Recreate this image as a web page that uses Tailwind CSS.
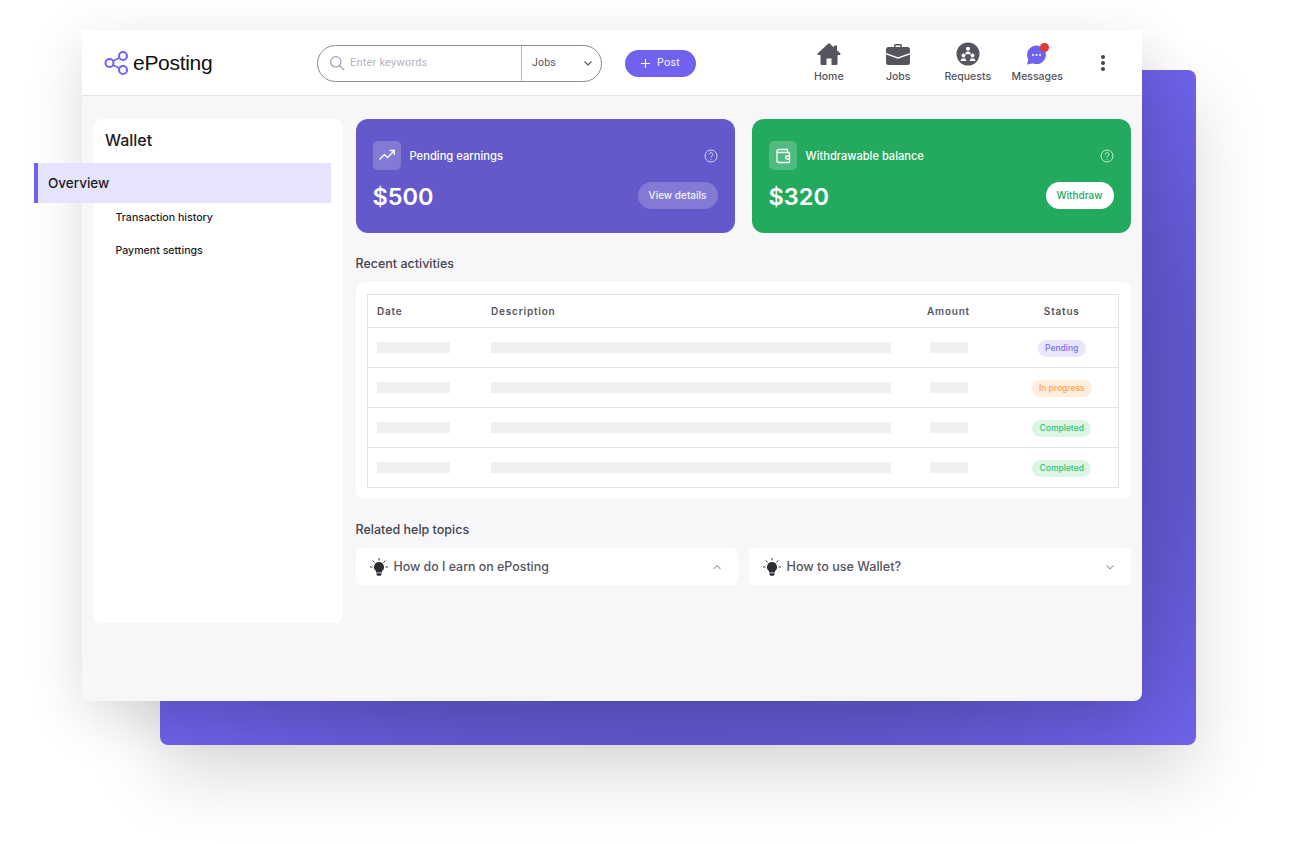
<!DOCTYPE html>
<html lang="en">
<head>
  <meta charset="UTF-8">
  <title>ePosting Wallet</title>
  <script src="https://cdn.jsdelivr.net/npm/@tailwindcss/browser@4"></script>
</head>
<body class="bg-white font-['Inter',sans-serif] overflow-hidden">
  <div class="relative w-[1302px] h-[844px] overflow-hidden bg-white">
    <!-- Purple backdrop -->
    <div class="absolute left-[160px] top-[70px] w-[1036px] h-[675px] rounded-[8px] bg-[radial-gradient(ellipse_at_center,#5a50bd_45%,#6056cc_72%,#6e61e8_100%)] shadow-[0_30px_70px_rgba(0,0,0,0.15)]"></div>

    <!-- App window -->
    <div class="absolute left-[82px] top-[30px] w-[1060px] h-[671px] rounded-b-[8px] bg-[#f7f7fa] shadow-[0_15px_55px_rgba(0,0,0,0.14)]">
      <!-- Header -->
      <header class="h-[66px] bg-white border-b border-[#e6e6ec] flex items-center">
        <div class="w-[235px] pl-[22px] flex items-center gap-[3px]">
          <svg width="26" height="26" viewBox="0 0 26 26" fill="none" stroke="#6f62ee" stroke-width="2">
            <circle cx="5.5" cy="13" r="4"/>
            <circle cx="19" cy="6" r="4"/>
            <circle cx="19" cy="20" r="4"/>
            <path d="M9 11l6-3M9 15l6 3" stroke-width="1.4"/>
          </svg>
          <span class="font-['Liberation_Sans',sans-serif] text-[21px] leading-none text-[#111] tracking-[-0.3px]">ePosting</span>
        </div>
        <div class="mt-[1px] w-[285px] h-[37px] border border-[#8b8a96] rounded-full flex items-center font-['Roboto',sans-serif]">
          <div class="w-[204px] h-full flex items-center pl-[11px] gap-[5px] border-r border-[#b5b5bd]">
            <svg width="16" height="16" viewBox="0 0 16 16" fill="none" stroke="#a2a2aa" stroke-width="1.2"><circle cx="6.8" cy="6.8" r="5.2"/><path d="M10.6 10.6l4.4 4.4"/></svg>
            <span class="text-[11px] text-[#b4b4bc] tracking-[0.2px]">Enter keywords</span>
          </div>
          <div class="flex-1 flex items-center justify-between pl-[10px] pr-[8px]">
            <span class="text-[10.5px] text-[#55545f] tracking-[0.2px]">Jobs</span>
            <svg width="10" height="10" viewBox="0 0 10 10" fill="none" stroke="#55545f" stroke-width="1.1"><path d="M1.5 3.5L5 7l3.5-3.5"/></svg>
          </div>
        </div>
        <button class="mt-[1px] ml-[23px] w-[71px] h-[27px] rounded-full bg-[#6f62ee] text-white flex items-center justify-center gap-[7px] text-[10.5px] tracking-[0.3px]">
          <svg width="9" height="9" viewBox="0 0 9 9" stroke="#fff" stroke-width="1.1"><path d="M4.5 0v9M0 4.5h9"/></svg>
          Post
        </button>
        <nav class="ml-[98px] flex items-start">
          <div class="w-[69.5px] flex flex-col items-center gap-[4px]">
            <svg width="24" height="24" viewBox="0 0 24 24" fill="#55545f"><path d="M12 1L0.800 11.300c-.7.700-.3 1.700.7 1.700H3.500v8.500A1.500 1.500 0 0 0 5 23h4.500v-6.500h5V23H19a1.500 1.500 0 0 0 1.500-1.500V13h2c1 0 1.400-1 .7-1.700L20 8.300V3.500h-3v2z"/></svg>
            <span class="text-[10.5px] font-medium leading-[14px] text-[#55545f]">Home</span>
          </div>
          <div class="w-[69.5px] flex flex-col items-center gap-[4px]">
            <svg width="24" height="24" viewBox="0 0 24 24"><path fill="#55545f" d="M8 5V3.500A1.500 1.500 0 0 1 9.500 2h5A1.500 1.500 0 0 1 16 3.500V5h5.500A2.500 2.500 0 0 1 24 7.500V11l-12 4.200L0 11V7.500A2.500 2.500 0 0 1 2.500 5zm1.500 0h5V3.500h-5z"/><path fill="#55545f" d="M0 12.600l12 4.200 12-4.200v7.900a2.500 2.500 0 0 1-2.500 2.500h-19A2.500 2.500 0 0 1 0 20.500z"/></svg>
            <span class="text-[10.5px] font-medium leading-[14px] text-[#55545f]">Jobs</span>
          </div>
          <div class="w-[69.5px] flex flex-col items-center gap-[4px]">
            <svg width="24" height="24" viewBox="0 0 24 24"><circle cx="12" cy="12" r="11.500" fill="#55545f"/><g fill="#fff"><circle cx="12" cy="6.800" r="2"/><path d="M9.200 12.300a2.800 2.800 0 0 1 5.600 0z"/><circle cx="7.500" cy="13.500" r="2"/><path d="M4.700 19a2.800 2.800 0 0 1 5.600 0z"/><circle cx="16.500" cy="13.500" r="2"/><path d="M13.700 19a2.800 2.800 0 0 1 5.600 0z"/></g></svg>
            <span class="text-[10.5px] font-medium leading-[14px] text-[#55545f]">Requests</span>
          </div>
          <div class="relative w-[69.5px] flex flex-col items-center gap-[4px]">
            <svg width="24" height="24" viewBox="0 0 24 24"><path fill="#6f62ee" d="M11.500 3.500a9.300 9.300 0 1 1-3.900 17.700l-4.600 1.300a.6.6 0 0 1-.7-.8l.9-4.400A9.300 9.300 0 0 1 11.500 3.500z"/><g fill="#fff"><circle cx="8" cy="13" r="1"/><circle cx="11.500" cy="13" r="1"/><circle cx="15" cy="13" r="1"/></g></svg>
            <span class="absolute left-[37px] top-[1px] w-[9px] h-[9px] rounded-full bg-[#e03b37]"></span>
            <span class="text-[10.5px] font-medium leading-[14px] text-[#55545f]">Messages</span>
          </div>
        </nav>
        <div class="ml-[29px] mt-[1px] flex flex-col gap-[2.500px]">
          <span class="w-[3.500px] h-[3.500px] rounded-full bg-[#45444f]"></span>
          <span class="w-[3.500px] h-[3.500px] rounded-full bg-[#45444f]"></span>
          <span class="w-[3.500px] h-[3.500px] rounded-full bg-[#45444f]"></span>
        </div>
      </header>

      <!-- Body -->
      <div class="flex pt-[23px] pl-[12px] pr-[11.500px] gap-[12.500px]">
        <!-- Sidebar -->
        <aside class="relative w-[249px] h-[504px] shrink-0 rounded-[8px] bg-white">
          <h2 class="pt-[11px] pl-[11px] text-[16px] leading-[20px] font-medium text-[#1c1b28]">Wallet</h2>
          <div class="absolute left-[-60px] top-[44px] w-[297px] h-[40px] bg-[#e6e3fc] border-l-[4px] border-[#6f62ee] flex items-center pl-[10px] text-[13.500px] font-medium text-[#1c1b28]">Overview</div>
          <ul class="mt-[51px] pl-[21.500px] text-[10.600px] font-medium text-[#1c1b28]">
            <li class="h-[33px] leading-[33px]">Transaction history</li>
            <li class="h-[33px] leading-[33px]">Payment settings</li>
          </ul>
        </aside>

        <!-- Main -->
        <main class="flex-1 min-w-0">
          <div class="grid grid-cols-2 gap-[17px]">
            <div class="h-[114px] rounded-[12px] bg-[#6359cb] px-[17px] pt-[22px] text-white">
              <div class="flex items-center">
                <span class="w-[28px] h-[29px] rounded-[5px] bg-white/20 flex items-center justify-center">
                  <svg width="18" height="18" viewBox="0 0 18 18" fill="none" stroke="#fff" stroke-width="1.3"><path d="M1.500 12.500l5-5 3 3 6.500-6.500M11.500 3.500H16.300V8"/></svg>
                </span>
                <span class="ml-[9px] mt-[1px] text-[11.200px] font-medium">Pending earnings</span>
                <svg class="ml-auto" width="14" height="14" viewBox="0 0 14 14" fill="none" stroke="#d8d5f3" stroke-width="1"><circle cx="7" cy="7" r="6"/><path d="M5.200 5.500a1.800 1.800 0 1 1 2.800 1.500c-.7.400-1 .8-1 1.500M7 9.700v1"/></svg>
              </div>
              <div class="flex items-center justify-between mt-[12px]">
                <span class="text-[23.500px] leading-[28px] font-semibold">$500</span>
                <button class="mb-[2px] w-[80px] h-[27px] rounded-full bg-white/20 text-[10px] font-medium text-white/90">View details</button>
              </div>
            </div>
            <div class="h-[114px] rounded-[12px] bg-[#24aa5e] px-[17px] pt-[22px] text-white">
              <div class="flex items-center">
                <span class="w-[28px] h-[29px] rounded-[5px] bg-white/20 flex items-center justify-center">
                  <svg width="18" height="18" viewBox="0 0 18 18" fill="none" stroke="#fff" stroke-width="1.300"><path d="M3 5.500V4a1.500 1.500 0 0 1 1.500-1.500h9V5.500"/><path d="M3 5.500h11.500a1 1 0 0 1 1 1v8a1 1 0 0 1-1 1h-10A1.500 1.500 0 0 1 3 14z"/><path d="M15.500 9h-2.500a1.500 1.500 0 0 0 0 3h2.500"/></svg>
                </span>
                <span class="ml-[9px] mt-[1px] text-[11.100px] font-medium">Withdrawable balance</span>
                <svg class="ml-auto" width="14" height="14" viewBox="0 0 14 14" fill="none" stroke="#c9ead7" stroke-width="1"><circle cx="7" cy="7" r="6"/><path d="M5.200 5.500a1.800 1.800 0 1 1 2.800 1.500c-.7.400-1 .8-1 1.500M7 9.700v1"/></svg>
              </div>
              <div class="flex items-center justify-between mt-[12px]">
                <span class="text-[23.500px] leading-[28px] font-semibold">$320</span>
                <button class="mb-[2px] w-[68px] h-[27px] rounded-full bg-white text-[10px] font-medium text-[#24aa5e]">Withdraw</button>
              </div>
            </div>
          </div>

          <h3 class="mt-[22px] text-[12.500px] leading-[17px] font-medium text-[#45444f]">Recent activities</h3>
          <div class="mt-[10px] h-[217px] rounded-[8px] bg-white pt-[12px] pl-[11.500px]">
            <table class="w-[752px] border-collapse border border-[#e4e4e8] table-fixed">
              <thead>
                <tr class="h-[33px] text-[10px] tracking-[0.8px] text-[#55545f]">
                  <th class="w-[123.500px] pl-[9px] text-left font-semibold">Date</th>
                  <th class="w-[400.500px] text-left font-semibold">Description</th>
                  <th class="w-[114px] text-center font-semibold">Amount</th>
                  <th class="text-center font-semibold">Status</th>
                </tr>
              </thead>
              <tbody>
                <tr class="h-[40px] border-t border-[#e4e4e8]">
                  <td class="pl-[9px]"><div class="w-[73px] h-[11px] bg-[#f0f0f0]"></div></td>
                  <td><div class="w-[400px] h-[11px] bg-[#f0f0f0]"></div></td>
                  <td><div class="mx-auto w-[38px] h-[11px] bg-[#f0f0f0]"></div></td>
                  <td><span class="block mt-[2px] mx-auto w-[48px] h-[17px] leading-[17px] text-center rounded-full bg-[#e8e6fd] text-[8.500px] font-medium text-[#7a6ef0]">Pending</span></td>
                </tr>
                <tr class="h-[40px] border-t border-[#e4e4e8]">
                  <td class="pl-[9px]"><div class="w-[73px] h-[11px] bg-[#f0f0f0]"></div></td>
                  <td><div class="w-[400px] h-[11px] bg-[#f0f0f0]"></div></td>
                  <td><div class="mx-auto w-[38px] h-[11px] bg-[#f0f0f0]"></div></td>
                  <td><span class="block mt-[2px] mx-auto w-[60px] h-[17px] leading-[17px] text-center rounded-full bg-[#ffeede] text-[8.500px] font-medium text-[#fba24c]">In progress</span></td>
                </tr>
                <tr class="h-[40px] border-t border-[#e4e4e8]">
                  <td class="pl-[9px]"><div class="w-[73px] h-[11px] bg-[#f0f0f0]"></div></td>
                  <td><div class="w-[400px] h-[11px] bg-[#f0f0f0]"></div></td>
                  <td><div class="mx-auto w-[38px] h-[11px] bg-[#f0f0f0]"></div></td>
                  <td><span class="block mt-[2px] mx-auto w-[59px] h-[17px] leading-[17px] text-center rounded-full bg-[#def5e6] text-[8.500px] font-medium text-[#2ec36e]">Completed</span></td>
                </tr>
                <tr class="h-[40px] border-t border-[#e4e4e8]">
                  <td class="pl-[9px]"><div class="w-[73px] h-[11px] bg-[#f0f0f0]"></div></td>
                  <td><div class="w-[400px] h-[11px] bg-[#f0f0f0]"></div></td>
                  <td><div class="mx-auto w-[38px] h-[11px] bg-[#f0f0f0]"></div></td>
                  <td><span class="block mt-[2px] mx-auto w-[59px] h-[17px] leading-[17px] text-center rounded-full bg-[#def5e6] text-[8.500px] font-medium text-[#2ec36e]">Completed</span></td>
                </tr>
              </tbody>
            </table>
          </div>

          <h3 class="mt-[22px] text-[12.500px] leading-[17px] font-medium text-[#45444f]">Related help topics</h3>
          <div class="mt-[10px] flex gap-[11px]">
            <div class="w-[382px] h-[37px] rounded-[6px] bg-white flex items-center pl-[14px] pr-[16px]">
              <svg width="18" height="18" viewBox="0 0 18 18" fill="none"><path stroke="#3c3b45" stroke-width="1" d="M9 0v2.500M2.500 2.500l2 2M15.500 2.500l-2 2M0 9h2.500M15.500 9H18"/><path fill="#2e2d36" d="M9 4a5 5 0 0 0-3 9v1.500h6V13a5 5 0 0 0-3-9z"/><path fill="#2e2d36" d="M6.500 15.200h5v1.200l-1 1.400h-3l-1-1.400z"/></svg>
              <span class="ml-[6px] mt-[1px] text-[12.400px] font-medium text-[#55545f]">How do I earn on ePosting</span>
              <svg class="ml-auto" width="10" height="10" viewBox="0 0 10 10" fill="none" stroke="#a9a9b0" stroke-width="1.100"><path d="M1.500 7L5 3.500 8.500 7"/></svg>
            </div>
            <div class="flex-1 h-[37px] rounded-[6px] bg-white flex items-center pl-[14px] pr-[16px]">
              <svg width="18" height="18" viewBox="0 0 18 18" fill="none"><path stroke="#3c3b45" stroke-width="1" d="M9 0v2.500M2.500 2.500l2 2M15.500 2.500l-2 2M0 9h2.500M15.500 9H18"/><path fill="#2e2d36" d="M9 4a5 5 0 0 0-3 9v1.500h6V13a5 5 0 0 0-3-9z"/><path fill="#2e2d36" d="M6.500 15.200h5v1.200l-1 1.400h-3l-1-1.400z"/></svg>
              <span class="ml-[6px] mt-[1px] text-[12.600px] font-medium text-[#55545f]">How to use Wallet?</span>
              <svg class="ml-auto" width="10" height="10" viewBox="0 0 10 10" fill="none" stroke="#a9a9b0" stroke-width="1.100"><path d="M1.500 3.500L5 7l3.500-3.500"/></svg>
            </div>
          </div>
        </main>
      </div>
    </div>
  </div>
</body>
</html>
